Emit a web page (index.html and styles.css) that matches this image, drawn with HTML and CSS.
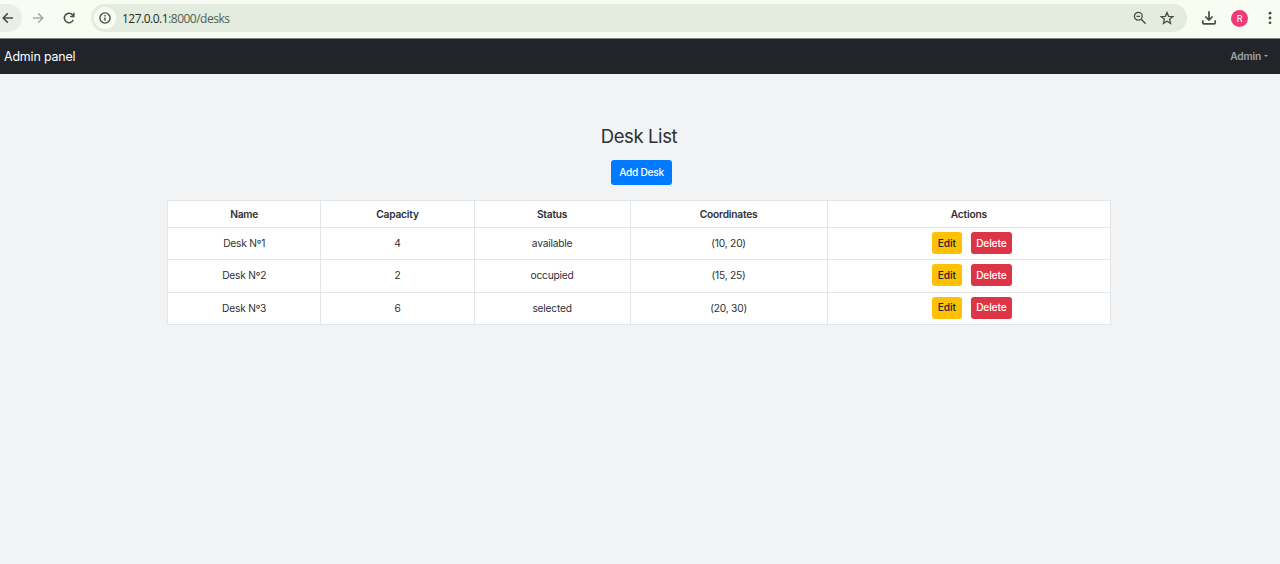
FILE: index.html
```html
<!DOCTYPE html>
<html lang="en">
<head>
<meta charset="utf-8">
<title>Desk List</title>
<link rel="stylesheet" href="styles.css">
</head>
<body>
<div class="browser">
  <span class="back"><svg width="16" height="16" viewBox="0 0 16 16"><path d="M13 8H3.4M7.8 3.4 3.2 8l4.600 4.600"/></svg></span>
  <svg class="forward" width="16" height="16" viewBox="0 0 16 16"><path d="M3 8h9.600M8.200 3.400 12.800 8l-4.600 4.600"/></svg>
  <svg class="reload" width="16" height="16" viewBox="0 0 16 16"><path d="M12.300 10A4.700 4.700 0 1 1 11.500 4.800L12.500 6"/><path d="M12.800 2.800v3.700H9.100"/></svg>
  <div class="address">
    <span class="site-info"><svg width="14" height="14" viewBox="0 0 14 14"><circle cx="7" cy="7" r="5.100"/><path d="M7 6.500v3.300M7 4.100v1.300"/></svg></span>
    <span class="url"><span class="host">127.0.0.1</span>:8000/desks</span>
    <svg class="zoom" width="14" height="14" viewBox="0 0 14 14"><circle cx="5.300" cy="5.300" r="3.900"/><path d="M8.200 8.200 12.700 12.700M3.500 5.300h3.600"/></svg>
    <svg class="star" width="14" height="14" viewBox="0 0 14 14"><path d="m7 1.500 1.600 3.800 4.100.35-3.100 2.700.95 4L7 10.200l-3.550 2.150.95-4-3.100-2.700 4.100-.35z"/></svg>
  </div>
  <svg class="download" width="16" height="16" viewBox="0 0 16 16"><path d="M8 1.300v8.600M4.400 6.500 8 10.100l3.600-3.600M1.800 10.300v2.400q0 1.200 1.200 1.200h10q1.200 0 1.200-1.200v-2.400"/></svg>
  <span class="avatar">R</span>
  <svg class="kebab" width="4" height="14" viewBox="0 0 4 14"><circle cx="2" cy="2.200" r="1.400"/><circle cx="2" cy="7" r="1.400"/><circle cx="2" cy="11.800" r="1.400"/></svg>
</div>
<nav class="navbar">
  <span class="brand">Admin panel</span>
  <span class="account">Admin<span class="caret"></span></span>
</nav>
<main class="content">
  <h1 class="title">Desk List</h1>
  <button class="btn add">Add Desk</button>
  <table class="desks">
    <colgroup><col class="c-name"><col class="c-capacity"><col class="c-status"><col class="c-coords"><col class="c-actions"></colgroup>
    <thead>
      <tr><th>Name</th><th>Capacity</th><th>Status</th><th>Coordinates</th><th>Actions</th></tr>
    </thead>
    <tbody>
      <tr><td>Desk Nº1</td><td>4</td><td>available</td><td>(10, 20)</td><td><div class="actions"><button class="btn edit">Edit</button><button class="btn delete">Delete</button></div></td></tr>
      <tr><td>Desk Nº2</td><td>2</td><td>occupied</td><td>(15, 25)</td><td><div class="actions"><button class="btn edit">Edit</button><button class="btn delete">Delete</button></div></td></tr>
      <tr><td>Desk Nº3</td><td>6</td><td>selected</td><td>(20, 30)</td><td><div class="actions"><button class="btn edit">Edit</button><button class="btn delete">Delete</button></div></td></tr>
    </tbody>
  </table>
</main>
</body>
</html>
```
FILE: styles.css
```css
* { box-sizing: border-box; }
body {
  margin: 0;
  height: 564px;
  overflow: hidden;
  background: #f2f3f5;
  color: #2c3034;
  font-family: Inter, "Open Sans", sans-serif;
  font-size: 10.2px;
  letter-spacing: -0.2px;
}
svg { display: block; flex: none; fill: none; stroke: #43503f; stroke-width: 1.5; }
.browser {
  display: flex;
  align-items: center;
  height: 39px;
  padding-bottom: 2px;
  background: #f8fcf3;
  border-bottom: 1px solid #7e847c;
}
.back {
  display: flex;
  align-items: center;
  justify-content: flex-end;
  width: 22px;
  height: 28px;
  padding-right: 6px;
  background: #e9efe6;
  border-radius: 0 14px 14px 0;
}
.forward { margin-left: 8px; stroke: #a5aca2; }
.reload { margin-left: 15px; }
.address {
  display: flex;
  align-items: center;
  width: 1096px;
  height: 28px;
  margin-left: 14px;
  padding: 0 13px 0 3px;
  background: #e3ecdf;
  border-radius: 14px;
}
.site-info {
  display: flex;
  align-items: center;
  justify-content: center;
  width: 22px;
  height: 22px;
  background: #f8fcf3;
  border-radius: 50%;
}
.site-info svg { stroke-width: 1.4; }
.url {
  flex: 1;
  margin-left: 6px;
  padding-top: 1px;
  color: #555d52;
  font: 12px/16px "Open Sans", "Noto Sans", sans-serif;
  letter-spacing: -0.5px;
}
.host { color: #252b23; }
.zoom, .star { stroke-width: 1.3; }
.star { margin-left: 13px; }
.download { margin-left: 14px; stroke-width: 1.7; }
.avatar {
  width: 17px;
  height: 17px;
  margin-left: 14px;
  border-radius: 50%;
  background: #ed3b78;
  color: #fff;
  font-size: 9px;
  line-height: 17px;
  text-align: center;
}
.kebab { margin-left: 20px; fill: #43503f; stroke: none; }
.navbar {
  display: flex;
  align-items: center;
  justify-content: space-between;
  height: 35px;
  padding: 0 12px 1px 4px;
  background: #212529;
}
.brand { color: #fff; font-size: 12.4px; letter-spacing: -0.15px; }
.account { display: flex; align-items: center; color: #a0a3a6; font-weight: 600; letter-spacing: -0.2px; }
.caret { margin-left: 3px; border: 2.500px solid transparent; border-top-color: #a0a3a6; border-bottom: 0; }
.content {
  display: flex;
  flex-direction: column;
  align-items: center;
  padding: 50px 2px 0 0;
}
.title { margin: 0; font-size: 18.5px; font-weight: 400; line-height: 24px; letter-spacing: -0.4px; }
.btn {
  display: flex;
  align-items: center;
  justify-content: center;
  padding: 0 0 1px;
  border: 0;
  border-radius: 3px;
  color: #fff;
  font: inherit;
  font-weight: 500;
  letter-spacing: -0.15px;
}
.add { width: 61px; height: 25px; margin: 12px 0 15px 5px; background: #007bff; letter-spacing: -0.3px; }
.desks {
  width: 944px;
  table-layout: fixed;
  border-collapse: collapse;
  background: #fff;
  text-align: center;
}
.desks th, .desks td { padding: 0; border: 1px solid #e3e6e9; }
.desks th { height: 27px; font-weight: 600; }
.desks td { height: 32.300px; padding-bottom: 1px; }
.c-name, .c-capacity { width: 153.300px; }
.c-status { width: 156px; }
.c-coords { width: 197px; }
.actions { display: flex; justify-content: center; gap: 9px; padding-left: 6px; }
.edit { width: 30px; height: 22px; background: #ffc107; color: #212529; }
.delete { width: 41px; height: 22px; background: #dc3545; }
```
